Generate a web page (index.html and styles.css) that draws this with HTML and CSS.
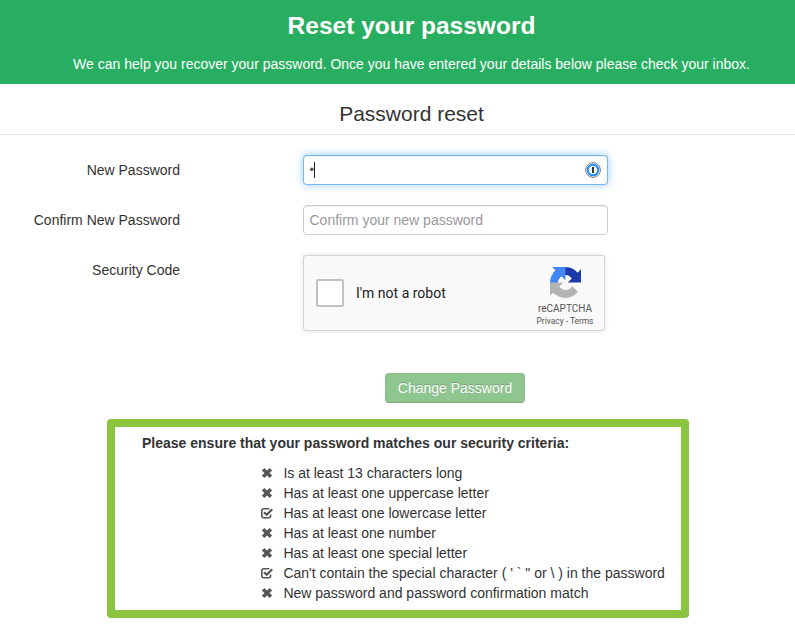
FILE: index.html
```html
<!DOCTYPE html>
<html lang="en">
<head>
    <meta charset="UTF-8">
    <meta name="viewport" content="width=device-width, initial-scale=1.0">
    <title>Reset your password</title>
    <link rel="stylesheet" href="styles.css">
</head>
<body>
    <!-- Shared icons -->
    <svg class="sprite" aria-hidden="true">
        <symbol id="remove" viewBox="0 0 12 12">
            <path d="M2.1 2.3L9.9 9.7M9.9 2.3L2.1 9.7" stroke="#555" stroke-width="3.6"/>
        </symbol>
        <symbol id="check" viewBox="0 0 12 12">
            <path d="M8.4 1.7H2.6A1.8 1.8 0 0 0 .8 3.5V8.9A1.8 1.8 0 0 0 2.6 10.7H7.8A1.8 1.8 0 0 0 9.6 8.9V7.4" fill="none" stroke="#555" stroke-width="1.6"/>
            <path d="M3 5.2L5.7 7.7L11.3 2.2" fill="none" stroke="#555" stroke-width="2.2"/>
        </symbol>
    </svg>

    <header class="header">
        <h1>Reset your password</h1>
        <p>We can help you recover your password. Once you have entered your details below please check your inbox.</p>
    </header>

    <form class="form">
        <h2 class="legend">Password reset</h2>

        <div class="row">
            <label class="label">New Password</label>
            <div class="field focused">
                <span class="typed">•</span>
                <svg class="key" viewBox="0 0 16 16">
                    <circle cx="8" cy="8" r="7.4" fill="#fff" stroke="#777" stroke-width="1"/>
                    <circle cx="8" cy="8" r="5.3" fill="#fff" stroke="#1a8cff" stroke-width="2"/>
                    <rect x="7" y="5" width="2" height="6" fill="#333"/>
                </svg>
            </div>
        </div>

        <div class="row">
            <label class="label" for="confirm">Confirm New Password</label>
            <input class="field" id="confirm" type="password" placeholder="Confirm your new password">
        </div>

        <div class="row">
            <label class="label">Security Code</label>
            <div class="captcha">
                <span class="checkbox"></span>
                <span class="robot">I'm not a robot</span>
                <div class="brand">
                    <svg class="logo" viewBox="0 0 64 64">
                        <path fill="#1c3aa9" d="M64 31.955l-.033-1.37V4.687l-7.16 7.16C50.948 4.674 42.033.093 32.05.093c-10.4 0-19.622 4.96-25.458 12.64l11.736 11.86a15.55 15.55 0 0 1 4.754-5.334c2.05-1.6 4.952-2.906 8.968-2.906.485 0 .86.057 1.135.163 4.976.393 9.288 3.14 11.828 7.124l-8.307 8.307L64 31.953"/>
                        <path fill="#4285f4" d="M31.862.094l-1.37.033H4.594l7.16 7.16C4.58 13.147 0 22.06 0 32.046c0 10.4 4.96 19.622 12.64 25.458L24.5 45.768a15.55 15.55 0 0 1-5.334-4.754c-1.6-2.05-2.906-4.952-2.906-8.968 0-.485.057-.86.163-1.135.393-4.976 3.14-9.288 7.124-11.828l8.307 8.307L31.86.095"/>
                        <path fill="#b3b3b3" d="M.001 32.045l.033 1.37v25.898l7.16-7.16c5.86 7.173 14.774 11.754 24.76 11.754 10.4 0 19.622-4.96 25.458-12.64l-11.736-11.86a15.55 15.55 0 0 1-4.754 5.334c-2.05 1.6-4.952 2.906-8.968 2.906-.485 0-.86-.057-1.135-.163-4.976-.393-9.288-3.14-11.828-7.124l8.307-8.307c-10.522.04-22.4.066-27.295-.005"/>
                    </svg>
                    <div class="brand-name">reCAPTCHA</div>
                    <div class="brand-links">Privacy - Terms</div>
                </div>
            </div>
        </div>

        <button class="submit" type="button">Change Password</button>
    </form>

    <section class="criteria">
        <h3>Please ensure that your password matches our security criteria:</h3>
        <ul>
            <li><svg><use href="#remove"/></svg>Is at least 13 characters long</li>
            <li><svg><use href="#remove"/></svg>Has at least one uppercase letter</li>
            <li><svg><use href="#check"/></svg>Has at least one lowercase letter</li>
            <li><svg><use href="#remove"/></svg>Has at least one number</li>
            <li><svg><use href="#remove"/></svg>Has at least one special letter</li>
            <li><svg><use href="#check"/></svg>Can't contain the special character ( ' ` " or \ ) in the password</li>
            <li><svg><use href="#remove"/></svg>New password and password confirmation match</li>
        </ul>
    </section>
</body>
</html>
```
FILE: styles.css
```css
* {
    box-sizing: border-box;
}

body {
    margin: 0;
    font-family: Arial, "Liberation Sans", sans-serif;
    font-size: 14px;
    line-height: 20px;
    color: #333;
    background-color: #fff;
    overflow: hidden;
}

.sprite {
    display: none;
}

.header {
    height: 84px;
    padding: 6px 0 0 28px;
    background-color: #28ae61;
    color: #fff;
    text-align: center;
    white-space: nowrap;
}

.header h1 {
    margin: 0;
    font-size: 24.5px;
    line-height: 40px;
}

.header p {
    margin: 8px 0 0;
}

.legend {
    margin: 0 0 20px;
    padding: 10px 0 0 28px;
    font-size: 21px;
    font-weight: normal;
    line-height: 40px;
    text-align: center;
    border-bottom: 1px solid #e5e5e5;
}

.row {
    display: flex;
    align-items: flex-start;
    margin-bottom: 20px;
}

.label {
    width: 180px;
    margin-right: 123px;
    padding-top: 5px;
    text-align: right;
}

.field {
    display: flex;
    align-items: center;
    justify-content: space-between;
    width: 305px;
    height: 30px;
    margin: 0;
    padding: 4px 6px 4px 5.5px;
    border: 1px solid #ccc;
    border-radius: 4px;
    background-color: #fff;
    box-shadow: inset 0 1px 1px rgba(0, 0, 0, 0.075);
    font: inherit;
    color: #555;
}

.field::placeholder {
    color: #999;
    opacity: 1;
}

.focused {
    border-color: rgba(82, 168, 236, 0.8);
    box-shadow: inset 0 1px 1px rgba(0, 0, 0, 0.075), 0 0 8px rgba(82, 168, 236, 0.6);
}

/* typed character with the text cursor after it */
.typed {
    width: 5px;
    height: 16px;
    border-right: 1px solid #222;
    font-size: 13px;
    line-height: 16px;
}

.key {
    width: 16px;
    height: 16px;
}

.captcha {
    display: flex;
    align-items: center;
    width: 302px;
    height: 76px;
    padding-left: 12px;
    border: 1px solid #d3d3d3;
    border-radius: 3px;
    background-color: #f9f9f9;
    box-shadow: 0 0 4px 1px rgba(0, 0, 0, 0.08);
    font-family: Roboto, sans-serif;
}

.checkbox {
    width: 28px;
    height: 28px;
    border: 2px solid #c1c1c1;
    border-radius: 2px;
    background-color: #fff;
}

.robot {
    margin-left: 12px;
    color: #222;
}

.brand {
    display: flex;
    flex-direction: column;
    align-items: center;
    width: 60px;
    margin-left: auto;
    margin-right: 9px;
    color: #555;
    white-space: nowrap;
}

.logo {
    width: 31px;
    height: 31px;
    margin-top: 6px;
}

.brand-name {
    margin-top: 5px;
    font-size: 10px;
    line-height: 12px;
}

.brand-links {
    margin-top: 1px;
    font-size: 8.4px;
    line-height: 10px;
}

.submit {
    display: block;
    width: 140px;
    height: 30px;
    margin: 42px 0 0 385px;
    padding: 0;
    border: 1px solid #8bc08b;
    border-bottom-color: #7dab7d;
    border-radius: 4px;
    background-color: #8fc58f;
    color: #fff;
    font: inherit;
    text-shadow: 0 -1px 0 rgba(0, 0, 0, 0.2);
}

.criteria {
    width: 582px;
    height: 199px;
    margin: 16px 0 0 107px;
    padding: 6px 0 0 27px;
    border: 8px solid #8bc53f;
    border-radius: 4px;
    white-space: nowrap;
}

.criteria h3 {
    margin: 0 0 10px;
    font-size: 14px;
    line-height: 20px;
}

.criteria ul {
    margin: 0;
    padding: 0 0 0 119px;
    list-style: none;
}

.criteria li {
    display: flex;
    align-items: center;
    height: 20px;
}

.criteria svg {
    width: 12px;
    height: 12px;
    margin-right: 10.4px;
}
```
